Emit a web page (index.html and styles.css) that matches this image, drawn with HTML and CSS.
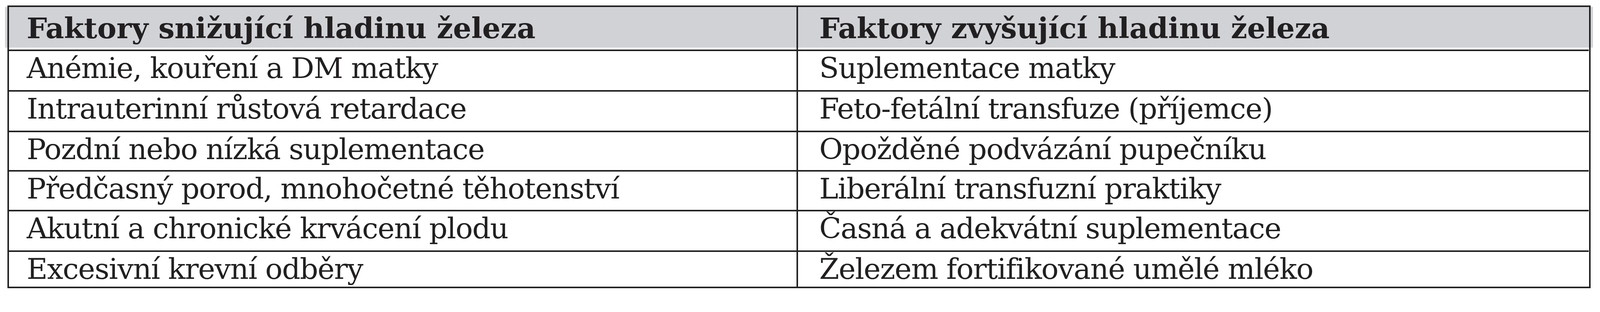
FILE: index.html
```html
<!DOCTYPE html>
<html lang="cs">
<head>
<meta charset="utf-8">
<title>Faktory hladiny železa</title>
<link rel="stylesheet" href="styles.css">
</head>
<body>
<div class="table">
  <div class="cell head c1">Faktory snižující hladinu železa</div>
  <div class="cell head c2">Faktory zvyšující hladinu železa</div>

  <div class="cell c1">Anémie, kouření a DM matky</div>
  <div class="cell c2">Suplementace matky</div>

  <div class="cell c1">Intrauterinní růstová retardace</div>
  <div class="cell c2">Feto-fetální transfuze (příjemce)</div>

  <div class="cell c1">Pozdní nebo nízká suplementace</div>
  <div class="cell c2">Opožděné podvázání pupečníku</div>

  <div class="cell c1">Předčasný porod, mnohočetné těhotenství</div>
  <div class="cell c2">Liberální transfuzní praktiky</div>

  <div class="cell c1">Akutní a chronické krvácení plodu</div>
  <div class="cell c2">Časná a adekvátní suplementace</div>

  <div class="cell c1 last">Excesivní krevní odběry</div>
  <div class="cell c2 last">Železem fortifikované umělé mléko</div>
</div>
</body>
</html>
```

FILE: styles.css
```css
:root {
  /* one unit = one pixel of the 4340px-wide design */
  --u: calc(100vw / 4340);
}

html {
  background: #ffffff;
  overflow: hidden;
}

body {
  margin: 0;
  padding: calc(15 * var(--u)) 0 0 calc(20 * var(--u));
  font-family: "DejaVu Serif", "Liberation Serif", serif;
  color: #211f20;
}

.table {
  position: relative;
  width: calc(4295 * var(--u));
  box-sizing: border-box;
  border: calc(5 * var(--u)) solid #222222;
  display: grid;
  grid-template-columns: calc(2140 * var(--u)) calc(2145 * var(--u));
  grid-template-rows:
    calc(120 * var(--u))
    calc(110 * var(--u))
    calc(110 * var(--u))
    calc(107 * var(--u))
    calc(108 * var(--u))
    calc(110 * var(--u))
    calc(95 * var(--u));
}

/* grey header band, slightly wider than the frame, painted under the rules */
.table::before {
  content: "";
  position: absolute;
  top: 0;
  left: calc(-10 * var(--u));
  right: calc(-10 * var(--u));
  height: calc(110 * var(--u));
  background: #d1d2d6;
  z-index: -1;
}

.cell {
  box-sizing: border-box;
  border-bottom: calc(5 * var(--u)) solid #222222;
  font-size: calc(78 * var(--u));
  line-height: calc(92 * var(--u));
  padding-top: calc(1 * var(--u));
  letter-spacing: calc(-1.6 * var(--u));
  white-space: nowrap;
}

.cell.last {
  border-bottom: none;
}

.c1 {
  border-right: calc(5 * var(--u)) solid #222222;
  padding-left: calc(48 * var(--u));
}

.c2 {
  padding-left: calc(58 * var(--u));
}

.head {
  font-weight: bold;
  letter-spacing: 0;
  padding-top: calc(11 * var(--u));
}
```
